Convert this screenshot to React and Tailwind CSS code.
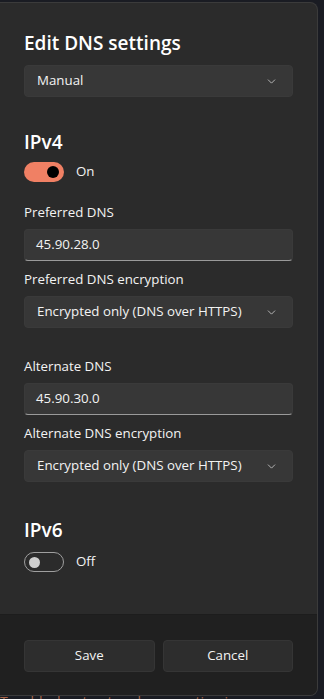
import { ChevronDown } from 'lucide-react';

const font = { fontFamily: '"Segoe UI", "Open Sans", "Noto Sans", sans-serif' };

function Select({ value }) {
  return (
    <div className="flex h-8 items-center justify-between rounded-[4px] border border-[#3a3a3a] bg-[#373737] pl-3 pr-[14px] text-[13.3px] text-[#f3f3f3]">
      <span>{value}</span>
      <ChevronDown size={13} strokeWidth={1.5} className="text-[#cfcfcf]" />
    </div>
  );
}

function TextBox({ value }) {
  return (
    <div className="flex h-8 items-center rounded-[4px] border border-[#3a3a3a] border-b-[#9a9a9a] bg-[#373737] px-[11px] text-[13.3px] text-[#f3f3f3]">
      {value}
    </div>
  );
}

function Toggle({ on }) {
  return (
    <div className="flex items-center gap-3">
      {on ? (
        <div className="flex h-5 w-10 items-center justify-end rounded-full bg-[#f08064] pr-[5px]">
          <div className="h-[12px] w-[12px] rounded-full bg-black" />
        </div>
      ) : (
        <div className="flex h-5 w-10 items-center rounded-full border border-[#9f9f9f] pl-[4px]">
          <div className="h-[11px] w-[11px] rounded-full bg-[#cecece]" />
        </div>
      )}
      <span className="text-[13.3px] text-[#f3f3f3]">{on ? 'On' : 'Off'}</span>
    </div>
  );
}

export default function App() {
  return (
    <div className="h-[699px] w-[324px] overflow-hidden bg-[#1a1c23] pt-[2px]" style={font}>
      <div className="flex h-[694px] w-[318px] flex-col overflow-hidden rounded-r-lg border border-l-0 border-[#3b3b3b] bg-[#2b2b2b]">
        <div className="flex-1 px-6 pt-[26px]">
          <h1 className="text-[19px] font-semibold leading-[28px] text-white">Edit DNS settings</h1>
          <div className="mt-[8px]">
            <Select value="Manual" />
          </div>

          <h2 className="mt-[31px] text-[19px] font-semibold leading-[28px] text-white">IPv4</h2>
          <div className="mt-[6px]">
            <Toggle on />
          </div>

          <div className="mt-[20px] text-[13.3px] leading-[20px] text-[#f3f3f3]">Preferred DNS</div>
          <div className="mt-[7px]">
            <TextBox value="45.90.28.0" />
          </div>
          <div className="mt-[8px] text-[13.3px] leading-[20px] text-[#f3f3f3]">Preferred DNS encryption</div>
          <div className="mt-[7px]">
            <Select value="Encrypted only (DNS over HTTPS)" />
          </div>

          <div className="mt-[28px] text-[13.3px] leading-[20px] text-[#f3f3f3]">Alternate DNS</div>
          <div className="mt-[7px]">
            <TextBox value="45.90.30.0" />
          </div>
          <div className="mt-[8px] text-[13.3px] leading-[20px] text-[#f3f3f3]">Alternate DNS encryption</div>
          <div className="mt-[7px]">
            <Select value="Encrypted only (DNS over HTTPS)" />
          </div>

          <h2 className="mt-[34px] text-[19px] font-semibold leading-[28px] text-white">IPv6</h2>
          <div className="mt-[8px]">
            <Toggle on={false} />
          </div>
        </div>

        <div className="flex h-[81px] gap-2 border-t border-[#1d1d1d] bg-[#202020] px-6 pt-[25px]">
          <button className="h-8 flex-1 rounded-[4px] border border-[#353535] bg-[#2d2d2d] text-[13.3px] text-[#f3f3f3]">
            Save
          </button>
          <button className="h-8 flex-1 rounded-[4px] border border-[#353535] bg-[#2d2d2d] text-[13.3px] text-[#f3f3f3]">
            Cancel
          </button>
        </div>
      </div>
      <div className="h-[3px] overflow-hidden">
        <div className="-mt-[2px] text-[14px] leading-[16px] text-[#a8664a]">Troubleshoot network connection issues</div>
      </div>
    </div>
  );
}
